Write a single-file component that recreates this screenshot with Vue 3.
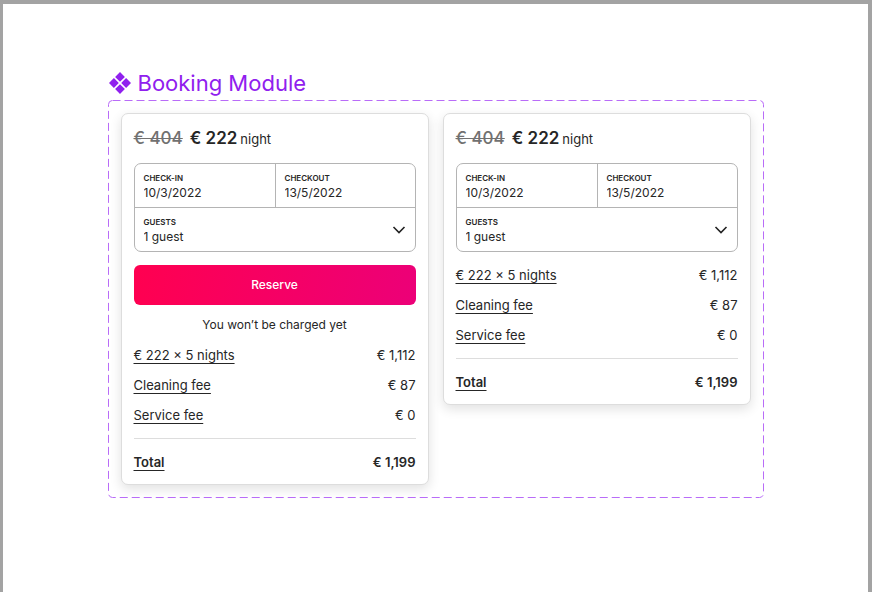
<script setup>
const fees = [
  { label: '€ 222 × 5 nights', amount: '€ 1,112' },
  { label: 'Cleaning fee', amount: '€ 87' },
  { label: 'Service fee', amount: '€ 0' },
]
const cards = [
  { id: 'full', reserve: true },
  { id: 'summary', reserve: false },
]
</script>

<template>
  <main class="canvas">
    <section class="module">
      <h1 class="title">
        <svg class="mark" viewBox="0 0 22 22" aria-hidden="true">
          <path d="M11 0 L15.9 4.9 L11 9.8 L6.1 4.9Z M4.9 6.1 L9.8 11 L4.9 15.9 L0 11Z M17.1 6.1 L22 11 L17.1 15.9 L12.2 11Z M11 12.2 L15.9 17.1 L11 22 L6.1 17.1Z" />
        </svg>
        Booking Module
      </h1>
      <div class="frame">
        <svg class="dashes" aria-hidden="true">
          <rect x="0.5" y="0.5" rx="4" />
        </svg>
        <form v-for="card in cards" :key="card.id" class="card" @submit.prevent>
          <p class="price">
            <s class="old">€ 404</s>
            <strong class="now">€ 222</strong>
            <span class="unit">night</span>
          </p>
          <div class="fields">
            <div class="field">
              <label :for="card.id + '-in'">CHECK-IN</label>
              <input :id="card.id + '-in'" type="text" value="10/3/2022" />
            </div>
            <div class="field checkout">
              <label :for="card.id + '-out'">CHECKOUT</label>
              <input :id="card.id + '-out'" type="text" value="13/5/2022" />
            </div>
            <div class="field guests">
              <label :for="card.id + '-guests'">GUESTS</label>
              <select :id="card.id + '-guests'">
                <option>1 guest</option>
              </select>
              <svg class="chevron" viewBox="0 0 14 8" aria-hidden="true">
                <path d="M1.5 1 L7 6.5 L12.5 1" />
              </svg>
            </div>
          </div>
          <template v-if="card.reserve">
            <button class="reserve" type="submit">Reserve</button>
            <p class="note">You won’t be charged yet</p>
          </template>
          <ul class="fees">
            <li v-for="fee in fees" :key="fee.label" class="line">
              <a href="#">{{ fee.label }}</a>
              <span>{{ fee.amount }}</span>
            </li>
          </ul>
          <p class="line total">
            <a href="#">Total</a>
            <span>€ 1,199</span>
          </p>
        </form>
      </div>
    </section>
  </main>
</template>

<style>
body {
  margin: 0;
  background: #fff;
}
</style>

<style scoped>
.canvas {
  box-sizing: border-box;
  min-height: 100vh;
  padding: 66px 16px 0;
  border: solid #a3a3a3;
  border-width: 4px 4px 0 3px;
  background: #fff;
  color: #262626;
  font-family: Inter, "Liberation Sans", sans-serif;
}
.module {
  max-width: 656px;
  margin: 0 auto;
}
.title {
  display: flex;
  align-items: center;
  gap: 7px;
  margin: 0;
  padding: 0 0 4px 1px;
  color: #9020ee;
  font-size: 22px;
  font-weight: 400;
  line-height: 26px;
}
.mark {
  width: 22px;
  height: 22px;
  fill: currentColor;
}
.frame {
  position: relative;
  display: grid;
  grid-template-columns: 1fr 1fr;
  align-items: start;
  gap: 14px;
  padding: 13px;
}
.dashes {
  position: absolute;
  inset: 0;
  width: 100%;
  height: 100%;
  pointer-events: none;
}
.dashes rect {
  width: calc(100% - 1px);
  height: calc(100% - 1px);
  fill: none;
  stroke: #b96cf8;
  stroke-dasharray: 8 4;
}
.card {
  box-sizing: border-box;
  padding: 12px;
  border: 1px solid #ddd;
  border-radius: 7px;
  background: #fff;
  box-shadow: 0 4px 12px rgba(0, 0, 0, 0.12);
  font-size: 13px;
}
.price {
  display: flex;
  align-items: baseline;
  margin: 0 0 12px;
  line-height: 24px;
}
.old,
.now {
  font-size: 17px;
  font-weight: 500;
}
.old {
  margin-right: 7px;
  color: #717171;
}
.now {
  margin-right: 3px;
  font-weight: 600;
}
.fields {
  display: grid;
  grid-template-columns: 1fr 1fr;
  border: 1px solid #b4b4b4;
  border-radius: 7px;
}
.field {
  display: flex;
  flex-direction: column;
  min-width: 0;
  padding: 8px 9px 6px;
}
.field label {
  font-size: 8px;
  font-weight: 600;
  line-height: 12px;
}
.field input,
.field select {
  box-sizing: border-box;
  width: 100%;
  height: 17px;
  padding: 0;
  border: 0;
  outline: 0;
  appearance: none;
  background: transparent;
  color: inherit;
  font: 12px/17px Inter, "Liberation Sans", sans-serif;
}
.checkout {
  border-left: 1px solid #b4b4b4;
}
.guests {
  position: relative;
  grid-column: 1 / -1;
  border-top: 1px solid #b4b4b4;
}
.chevron {
  position: absolute;
  right: 9px;
  top: 18px;
  width: 14px;
  height: 8px;
  fill: none;
  stroke: #222;
  stroke-width: 1.6;
  pointer-events: none;
}
.reserve {
  display: block;
  width: 100%;
  height: 40px;
  margin-top: 13px;
  border: 0;
  border-radius: 6px;
  background: linear-gradient(100deg, #ff0050, #ec0078);
  color: #fff;
  font: 500 12px/16px Inter, "Liberation Sans", sans-serif;
}
.note {
  margin: 12px 0 -1px;
  font-size: 12px;
  line-height: 16px;
  text-align: center;
}
.fees {
  display: grid;
  gap: 12px;
  margin: 0;
  padding: 14px 0;
  border-bottom: 1px solid #ddd;
  list-style: none;
}
.line {
  display: flex;
  justify-content: space-between;
  line-height: 18px;
}
.line a {
  color: inherit;
  text-decoration: underline;
  text-decoration-thickness: 1px;
  text-decoration-skip-ink: none;
  text-underline-offset: 3px;
}
.total {
  margin: 14px 0 0;
  padding-bottom: 1px;
  font-weight: 600;
}
</style>
